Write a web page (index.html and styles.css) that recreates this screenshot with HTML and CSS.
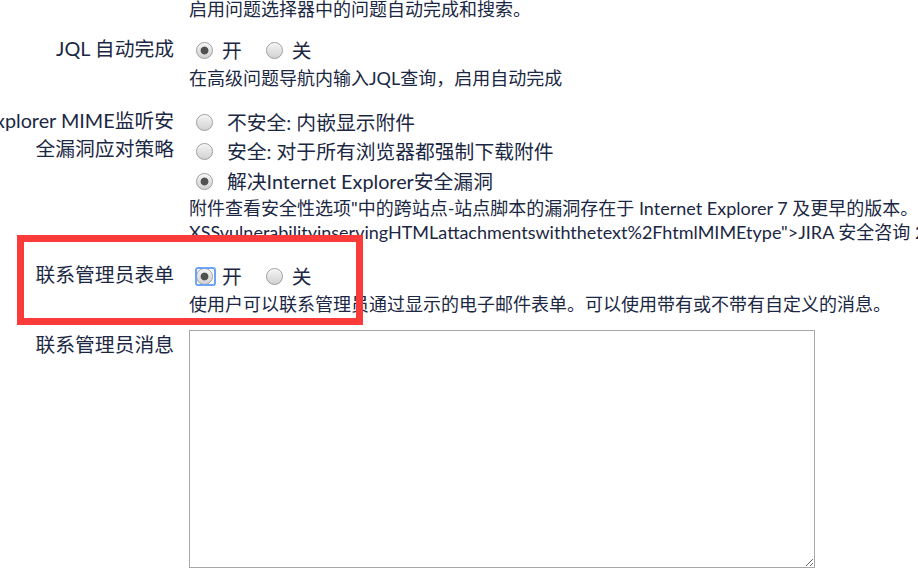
FILE: index.html
```html
<!DOCTYPE html>
<html lang="zh-CN">
<head>
<meta charset="utf-8">
<title>常规配置</title>
<link rel="stylesheet" href="styles.css">
</head>
<body>
<div class="page">
  <form class="settings">
    <div class="field field-top">
      <div class="label"></div>
      <div class="content">
        <div class="desc">启用问题选择器中的问题自动完成和搜索。</div>
      </div>
    </div>

    <div class="field">
      <div class="label">JQL 自动完成</div>
      <div class="content">
        <div class="options">
          <div class="opt-line">
            <input type="radio" name="jql" checked><span class="opt-text">开</span>
            <input type="radio" name="jql"><span class="opt-text">关</span>
          </div>
        </div>
        <div class="desc">在高级问题导航内输入JQL查询，启用自动完成</div>
      </div>
    </div>

    <div class="field">
      <div class="label nowrap">Internet Explorer MIME监听安<br>全漏洞应对策略</div>
      <div class="content">
        <div class="options">
          <div class="opt-line opt-block"><input type="radio" name="ie"><span>不安全: 内嵌显示附件</span></div>
          <div class="opt-line opt-block"><input type="radio" name="ie"><span>安全: 对于所有浏览器都强制下载附件</span></div>
          <div class="opt-line opt-block"><input type="radio" name="ie" checked><span>解决Internet Explorer安全漏洞</span></div>
        </div>
        <div class="desc nowrap">附件查看安全性选项"中的跨站点-站点脚本的漏洞存在于 Internet Explorer 7 及更早的版本。有关详细信息，请参阅<br>XSSvulnerabilityinservingHTMLattachmentswiththetext%2FhtmlMIMEtype"&gt;JIRA 安全咨询 2010-04-16&lt;/a&gt;。</div>
      </div>
    </div>

    <div class="field">
      <div class="label">联系管理员表单</div>
      <div class="content">
        <div class="options">
          <div class="opt-line">
            <span class="focus-ring"><input type="radio" name="contact" checked></span><span class="opt-text">开</span>
            <input type="radio" name="contact"><span class="opt-text">关</span>
          </div>
        </div>
        <div class="desc">使用户可以联系管理员通过显示的电子邮件表单。可以使用带有或不带有自定义的消息。</div>
      </div>
    </div>

    <div class="field field-last">
      <div class="label">联系管理员消息</div>
      <div class="content">
        <textarea class="message"></textarea>
      </div>
    </div>
  </form>
  <div class="highlight"></div>
</div>
</body>
</html>
```

FILE: styles.css
```css
html, body {
  margin: 0;
  padding: 0;
  background: #ffffff;
  overflow: hidden;
}

body {
  width: 918px;
  height: 568px;
  font-family: "Lato", "Noto Sans CJK SC", sans-serif;
  color: #1b2743;
}

.page {
  position: relative;
  width: 918px;
  height: 568px;
  overflow: hidden;
}

.settings {
  margin: -3.5px 0 0 -106px;
}

.field {
  display: grid;
  grid-template-columns: 280px 1fr;
  column-gap: 15px;
  padding: 8px 0;
}

.field-top {
  padding: 0 0 5.5px;
}

.field-last {
  padding-top: 6px;
}

.label {
  text-align: right;
  font-size: 19.8px;
  line-height: 28px;
}

.nowrap {
  white-space: nowrap;
}

.content {
  min-width: 0;
}

.options {
  margin-top: 2px;
  font-size: 19.8px;
}

.opt-line {
  display: flex;
  align-items: center;
  height: 29.5px;
  line-height: 29.5px;
}

.opt-line input[type="radio"] {
  margin: 0 9px 0 7px;
}

.opt-text {
  margin-right: 17px;
}

.opt-block input[type="radio"] {
  margin: 0 14px 0 7px;
}

input[type="radio"] {
  -webkit-appearance: none;
  appearance: none;
  box-sizing: border-box;
  width: 17px;
  height: 17px;
  flex: none;
  border-radius: 50%;
  border: 1px solid #9d9d9d;
  background: linear-gradient(#f3f3f3, #d2d2d2);
  box-shadow: inset 0 1px 1px rgba(255, 255, 255, 0.8);
}

input[type="radio"]:checked {
  background:
    radial-gradient(circle at 50% 50%, #505050 0, #505050 3.5px, rgba(80, 80, 80, 0) 4.3px),
    linear-gradient(#f3f3f3, #d2d2d2);
}

.focus-ring {
  position: relative;
  display: inline-flex;
  align-items: center;
}

.focus-ring::after {
  content: "";
  position: absolute;
  top: -1px;
  bottom: -1px;
  left: 6px;
  right: 6px;
  border: 2px solid #6ea5f3;
  border-radius: 3px;
}

.desc {
  font-size: 18px;
  line-height: 24px;
}

.message {
  display: block;
  box-sizing: border-box;
  width: 626px;
  height: 238px;
  margin: 0;
  border: 1px solid #a9a9a9;
  background: #ffffff;
  font-family: inherit;
  resize: both;
}

.highlight {
  position: absolute;
  left: 17px;
  top: 235px;
  width: 346px;
  height: 90px;
  box-sizing: border-box;
  border: 7px solid #fb3a3a;
}
```
